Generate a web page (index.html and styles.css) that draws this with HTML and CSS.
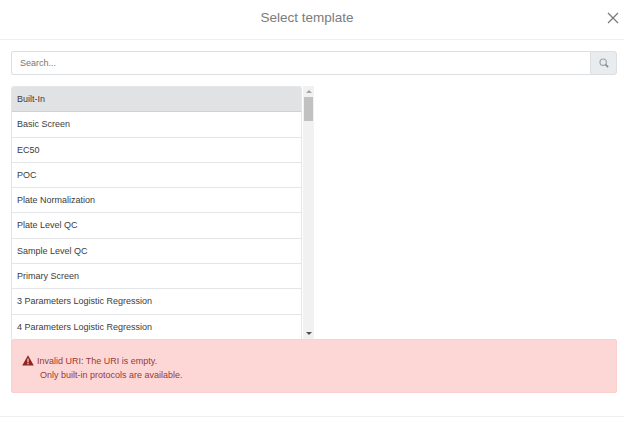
FILE: index.html
```html
<!DOCTYPE html>
<html lang="en">
<head>
<meta charset="utf-8">
<title>Select template</title>
<link rel="stylesheet" href="styles.css">
</head>
<body>
<div class="modal">
  <header class="modal-header">
    <h1 class="modal-title">Select template</h1>
    <button class="close" aria-label="Close">
      <svg width="12" height="12" viewBox="0 0 12 12"><path d="M1 1L11 11M11 1L1 11" stroke="#777" stroke-width="1.2" fill="none"/></svg>
    </button>
  </header>
  <main class="modal-body">
    <div class="search">
      <input class="search-input" type="text" placeholder="Search...">
      <span class="search-btn">
        <svg width="10" height="10" viewBox="0 0 12 12"><circle cx="5" cy="5" r="3.8" stroke="#9aa1a8" stroke-width="1.4" fill="none"/><path d="M7.8 7.8L11 11" stroke="#80888f" stroke-width="2"/></svg>
      </span>
    </div>
    <div class="list-wrap">
      <ul class="list">
        <li class="item active">Built-In</li>
        <li class="item">Basic Screen</li>
        <li class="item">EC50</li>
        <li class="item">POC</li>
        <li class="item">Plate Normalization</li>
        <li class="item">Plate Level QC</li>
        <li class="item">Sample Level QC</li>
        <li class="item">Primary Screen</li>
        <li class="item">3 Parameters Logistic Regression</li>
        <li class="item">4 Parameters Logistic Regression</li>
      </ul>
      <div class="scrollbar">
        <span class="arrow up"></span>
        <span class="track"><span class="thumb"></span></span>
        <span class="arrow down"></span>
      </div>
    </div>
    <div class="alert">
      <div class="alert-line">
        <svg class="warn" width="12" height="11" viewBox="0 0 12 11"><path d="M6 0.3L11.8 10.6H0.2Z" fill="#8f2320"/><rect x="5.4" y="3.6" width="1.2" height="3.8" fill="#fdd"/><rect x="5.4" y="8.1" width="1.2" height="1.2" fill="#fdd"/></svg>
        <span>Invalid URI: The URI is empty.</span>
      </div>
      <div class="alert-line second">Only built-in protocols are available.</div>
    </div>
  </main>
  <footer class="modal-footer"></footer>
</div>
</body>
</html>
```
FILE: styles.css
```css
* { box-sizing: border-box; }
html, body { margin: 0; padding: 0; background: #fff; }
body { width: 624px; height: 423px; overflow: hidden; font-family: "Liberation Sans", Arial, sans-serif; font-size: 10px; color: #333; }
.modal { display: flex; flex-direction: column; height: 423px; }
.modal-header { height: 40px; flex: none; border-bottom: 1px solid #eceef0; display: flex; align-items: center; justify-content: center; position: relative; padding-right: 10px; }
.modal-title { margin: 0; font-size: 13.5px; font-weight: 400; color: #7b7b7b; padding-bottom: 4px; }
.close { position: absolute; right: 5px; top: 12px; width: 12px; height: 12px; padding: 0; border: 0; background: none; display: flex; }
.modal-body { padding: 11px 7px 0 11px; flex: none; height: 376px; }
.search { display: flex; height: 24px; }
.search-input { flex: 1; min-width: 0; height: 24px; border: 1px solid #dcdfe2; border-right: 0; border-radius: 3px 0 0 3px; padding: 0 8px; font: 9px "Liberation Sans", Arial, sans-serif; color: #495057; outline: 0; }
.search-input::placeholder { color: #777; opacity: 1; }
.search-btn { width: 27px; height: 24px; background: #e9ecef; border: 1px solid #dcdfe2; border-radius: 0 3px 3px 0; display: flex; align-items: center; justify-content: center; }
.list-wrap { display: flex; margin-top: 11px; height: 253px; gap: 1px; }
.list { list-style: none; margin: 0; padding: 0; width: 291px; height: 253px; overflow: hidden; border-radius: 3px 3px 0 0; border: 1px solid #e3e5e8; border-bottom: 0; }
.item { height: 25.3px; line-height: 24.3px; padding-left: 5px; border-bottom: 1px solid #e3e5e8; font-size: 9px; color: #3c3c3c; white-space: nowrap; }
.item:last-child { border-bottom: 0; }
.item.active { background: #e1e2e4; border-bottom-color: #cfd2d4; }
.scrollbar { width: 11px; background: #f1f1f1; display: flex; flex-direction: column; align-items: center; }
.arrow { flex: none; height: 11px; width: 100%; display: flex; align-items: center; justify-content: center; }
.arrow::before { content: ""; border-left: 3px solid transparent; border-right: 3px solid transparent; }
.arrow.up::before { border-bottom: 3px solid #a3a3a3; }
.arrow.down::before { border-top: 3px solid #505050; }
.track { flex: 1; width: 100%; }
.thumb { display: block; height: 24px; background: #c1c1c1; margin: 0 1px; }
.alert { height: 54px; background: #fdd7d6; border: 1px solid #fcd0cf; border-radius: 2px; padding: 13px 10px 0; color: #96393a; font-size: 9px; }
.alert-line { display: flex; align-items: center; gap: 3px; height: 15px; }
.alert-line.second { padding-left: 18px; height: 14px; }
.modal-footer { flex: none; border-top: 1px solid #eceef0; height: 7px; }
```
